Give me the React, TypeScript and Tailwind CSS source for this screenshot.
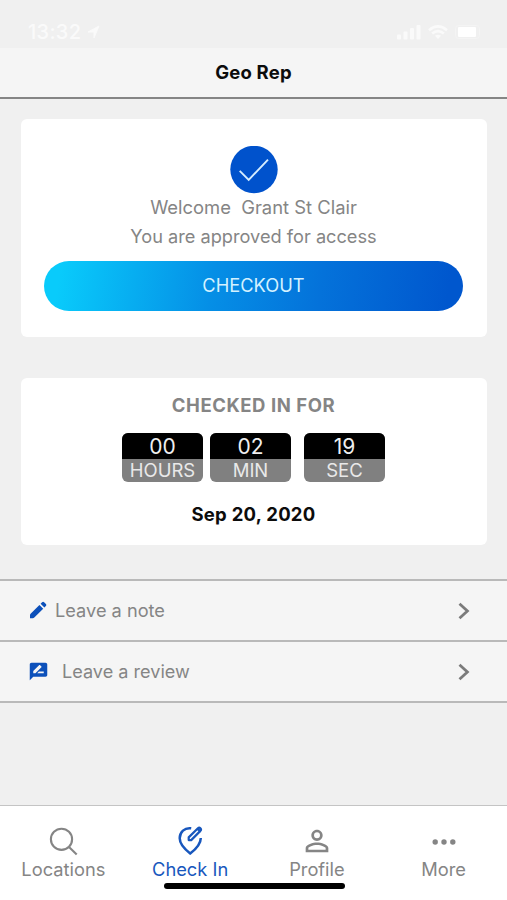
import React from "react";
import { MdRateReview, MdPersonOutline } from "react-icons/md";

function StatusBar() {
  return (
    <div className="flex h-12 items-start justify-between bg-[#f0f0f0] pr-[25px] pl-[28px] pt-[20px] text-[#fafafa]">
      <div className="flex items-center gap-[6px]">
        <span className="text-[20px] leading-6 font-medium tracking-[0.3px]">13:32</span>
        <svg className="h-[14px] w-[13px]" viewBox="0 0 13 14">
          <path d="M12 1 7 13V7H1Z" fill="currentColor" stroke="currentColor" strokeWidth="1" strokeLinejoin="round" />
        </svg>
      </div>
      <div className="flex h-6 items-center">
        <svg className="h-4 w-6" viewBox="0 0 24 16" fill="currentColor">
          <rect x="0" y="10.5" width="4" height="5" rx="1" />
          <rect x="6.5" y="7.5" width="4" height="8" rx="1" />
          <rect x="13" y="4" width="4" height="11.5" rx="1" />
          <rect x="19.5" y="1" width="4" height="14.5" rx="1" />
        </svg>
        <svg className="ml-[7px] h-[15px] w-5" viewBox="0 0 20 15" fill="none" stroke="currentColor" strokeWidth="2.6">
          <path d="M1 5.2Q10-2.4 19 5.2M4.2 8.5Q10 3.6 15.8 8.5" />
          <path d="m10 14-3-3.2Q10 8.5 13 10.8Z" fill="currentColor" stroke="none" />
        </svg>
        <svg className="ml-[7px] h-[14px] w-[27px]" viewBox="0 0 27 14">
          <rect x="0.5" y="0.5" width="24" height="13" rx="3" fill="none" stroke="#f4f4f4" />
          <rect x="3" y="2" width="18" height="10" rx="1" fill="#ffffff" />
        </svg>
      </div>
    </div>
  );
}

function Tile({ value, unit }: { value: string; unit: string }) {
  return (
    <div className="flex h-[49px] w-[81px] flex-col overflow-hidden rounded-[6px] bg-[#808080] text-center">
      <span className="h-[26px] bg-black text-[21px] leading-[27px] text-[#efefef]">{value}</span>
      <span className="text-[18.5px] leading-[23px] whitespace-nowrap text-[#e9e9e9]">{unit}</span>
    </div>
  );
}

function Chevron() {
  return (
    <svg className="h-[18px] w-3" viewBox="0 0 12 18" fill="none" stroke="#7b7b7b" strokeWidth="2.8">
      <path d="m1.5 1.8 7.9 7.2-7.9 7.2" />
    </svg>
  );
}

function PencilIcon() {
  return (
    <svg className="mb-[2px] h-[20px] w-[20px]" viewBox="0 0 20 20" fill="#0c50ba">
      <path d="M2 18.3V15.1Q2 14.3 2.6 13.7L11.4 4.9 15.2 8.7 6.3 17.5Q5.6 18.3 4.8 18.3Z" />
      <path d="m12.6 3.7 1.5-1.5q1-1 2 0l1.8 1.8q1 1 0 2l-1.5 1.5Z" />
    </svg>
  );
}

function CheckInIcon() {
  return (
    <svg className="mb-[2px] h-[31px] w-[27px]" viewBox="0 0 27 31" fill="none" stroke="currentColor">
      <path d="M14.2 3.3C7.6 2.3 2.7 7.2 2.7 13.3c0 5.2 4.1 10.2 10.5 15.2 6.4-5 10.6-10 10.6-15.6" strokeWidth="2.5" />
      <path d="m11.7 12.4 9.2-9.1q1.3-1.2 2.5 0t0 2.6l-9.2 9.2h-2.5Z" strokeWidth="2.2" strokeLinejoin="round" />
      <path d="m20 4.4 2.8 2.8 1.2-1.8-2.3-2.1Z" fill="currentColor" strokeWidth="1" />
    </svg>
  );
}

function Tab({ label, active, children }: { label: string; active?: boolean; children: React.ReactNode }) {
  return (
    <div className={`flex flex-1 flex-col items-center ${active ? "text-[#1857bd]" : "text-[#858585]"}`}>
      <div className="flex h-[52px] items-end justify-center">{children}</div>
      <span className="text-[18.3px] leading-[22px] whitespace-nowrap">{label}</span>
    </div>
  );
}

export default function App() {
  return (
    <div className="flex h-[900px] w-[507px] flex-col overflow-hidden bg-[#f0f0f0] font-['Inter',sans-serif] text-[18px]">
      <StatusBar />
      <header className="flex h-[51px] items-center justify-center border-b-2 border-[#858585] bg-[#f5f5f5] text-[18.5px] font-bold tracking-[0.2px] text-[#0c0c0c]">
        Geo Rep
      </header>

      <main className="flex flex-1 flex-col">
        <section className="mx-auto mt-5 flex h-[218px] w-[466px] flex-col items-center rounded-[6px] bg-white pt-[27px]">
          <svg className="h-12 w-12 shrink-0" viewBox="0 0 48 48">
            <circle cx="24" cy="23.5" r="23.7" fill="#0052cc" />
            <path d="m9.7 24.8 9 9L38 13.7" fill="none" stroke="#d5edff" strokeWidth="1.9" />
          </svg>
          <p className="text-[18.4px] leading-[26px] whitespace-pre text-[#858585]">{"Welcome  Grant St Clair"}</p>
          <p className="mt-[2px] text-[18.2px] leading-[28px] text-[#858585]">You are approved for access</p>
          <button className="mt-[11px] h-[50px] w-[419px] rounded-full bg-[linear-gradient(98deg,#09cbfb_4%,#058fe6_40%,#0472da_66%,#0057ce_96%)] text-[18.3px] text-[#d3f1ff]">
            CHECKOUT
          </button>
        </section>

        <section className="mx-auto mt-[41px] flex h-[167px] w-[466px] flex-col items-center rounded-[6px] bg-white pt-[15px]">
          <h2 className="text-[18.5px] leading-6 font-bold tracking-[0.55px] text-[#858585]">CHECKED IN FOR</h2>
          <div className="mt-4 flex">
            <Tile value="00" unit="HOURS" />
            <div className="ml-[7px]"><Tile value="02" unit="MIN" /></div>
            <div className="ml-[13px]"><Tile value="19" unit="SEC" /></div>
          </div>
          <p className="mt-5 text-[18.5px] leading-6 font-bold tracking-[0.25px] text-[#0c0c0c]">Sep 20, 2020</p>
        </section>

        <div className="mt-[34px] border-t-2 border-[#b9b9b9] bg-[#f5f5f5] text-[#858585]">
          <div className="flex h-[61px] items-center border-b-2 border-[#b9b9b9] pr-[37px] pl-[28px]">
            <PencilIcon />
            <span className="ml-[7px] flex-1 text-[18.2px]">Leave a note</span>
            <Chevron />
          </div>
          <div className="flex h-[61px] items-center border-b-2 border-[#b9b9b9] pr-[37px] pl-[28px]">
            <MdRateReview className="text-[21px] text-[#0c50ba]" />
            <span className="ml-[13px] flex-1 text-[18.1px]">Leave a review</span>
            <Chevron />
          </div>
        </div>
      </main>

      <nav className="relative flex h-[95px] border-t border-[#c4c4c4] bg-white">
        <Tab label="Locations">
          <svg className="mb-[2px] h-[29px] w-[29px]" viewBox="0 0 29 29" fill="none" stroke="currentColor" strokeWidth="2.1">
            <circle cx="12.5" cy="12.3" r="10.6" />
            <path d="m20 20 7.7 7.5" />
          </svg>
        </Tab>
        <Tab label="Check In" active>
          <CheckInIcon />
        </Tab>
        <Tab label="Profile">
          <MdPersonOutline className="text-[34px]" />
        </Tab>
        <Tab label="More">
          <svg className="mb-[13px] h-[6px] w-6" viewBox="0 0 24 6" fill="currentColor">
            <circle cx="3.2" cy="3" r="2.7" />
            <circle cx="12" cy="3" r="2.7" />
            <circle cx="20.8" cy="3" r="2.7" />
          </svg>
        </Tab>
        <div className="absolute top-[77px] left-[164px] h-[6px] w-[181px] rounded-full bg-black" />
      </nav>
    </div>
  );
}
